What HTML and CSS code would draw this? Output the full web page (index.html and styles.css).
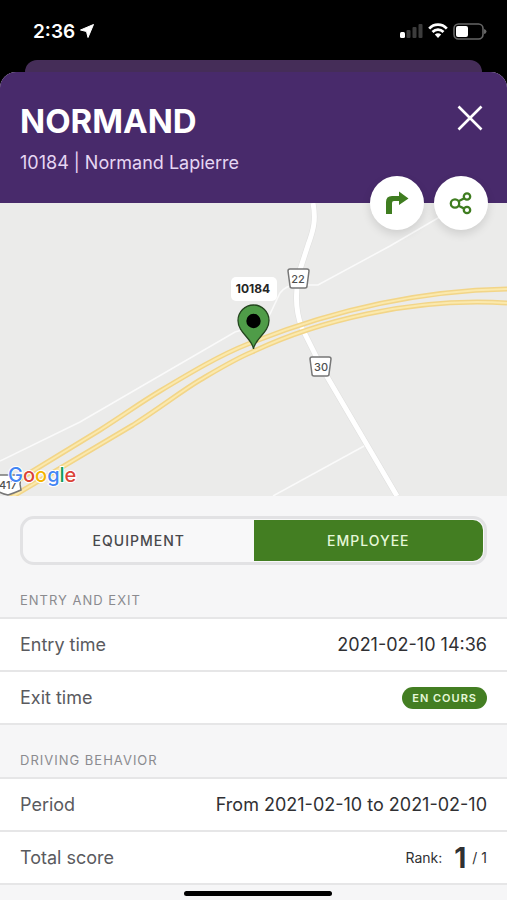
FILE: index.html
```html
<!DOCTYPE html>
<html lang="en">
<head>
    <meta charset="utf-8">
    <meta name="viewport" content="width=device-width, initial-scale=1">
    <title>Normand</title>
    <link rel="stylesheet" href="styles.css">
</head>
<body>
    <div class="status-bar">
        <div class="status-time">
            <span>2:36</span>
            <svg width="14" height="14" viewBox="0 0 14 14"><path d="M13.5 0.5L8 13.5L6.5 7.5L0.5 6Z" fill="#fff" stroke="#fff" stroke-linejoin="round"/></svg>
        </div>
        <div class="status-icons">
            <svg width="23" height="16" viewBox="0 0 23 16">
                <rect x="0" y="9" width="5" height="6" rx="1.5" fill="#fff"/>
                <rect x="6.500" y="7" width="4" height="8" rx="1" fill="#3c3c3c"/>
                <rect x="12.500" y="4" width="4" height="11" rx="1" fill="#3c3c3c"/>
                <rect x="18.500" y="1" width="4" height="14" rx="1" fill="#3c3c3c"/>
            </svg>
            <svg width="20" height="16" viewBox="0 0 20 16" fill="none" stroke="#fff" stroke-width="2.7">
                <path d="M1.2 5.6C6 0.4 14 0.4 18.8 5.6"/>
                <path d="M4.5 9C7.7 5.7 12.3 5.7 15.5 9"/>
                <path d="M10 15L6.8 11.6Q10 8.8 13.2 11.6Z" fill="#fff" stroke="none"/>
            </svg>
            <svg width="34" height="17" viewBox="0 0 34 17">
                <rect x="1" y="1" width="29" height="15" rx="4.5" fill="none" stroke="#666" stroke-width="1.6"/>
                <rect x="3" y="3" width="12" height="11" rx="2" fill="#fff"/>
                <path d="M31 6Q33.500 6.500 33.500 8.500T31 11Z" fill="#666"/>
            </svg>
        </div>
    </div>

    <div class="back-card"></div>

    <main class="sheet">
        <header class="header">
            <div>
                <h1>NORMAND</h1>
                <p class="subtitle">10184 | Normand Lapierre</p>
            </div>
            <button class="close" type="button" aria-label="Close">
                <svg width="26" height="26" viewBox="0 0 26 26"><path d="M1.500 1.500L24.500 24.500M24.500 1.500L1.500 24.500" stroke="#fff" stroke-width="2.600" fill="none"/></svg>
            </button>
            <div class="actions">
                <button class="action" type="button" aria-label="Directions">
                    <svg width="24" height="24" viewBox="0 0 24 24"><path d="M1 23V11Q1 5 7 5H14V0.500L23.500 7.500L14 14V10H9Q7 10 7 12V23Z" fill="#3f7d20"/></svg>
                </button>
                <button class="action" type="button" aria-label="Share">
                    <svg width="24" height="24" viewBox="0 0 24 24" fill="none" stroke="#3f7d20" stroke-width="2.300">
                        <circle cx="6" cy="12.500" r="4.200"/>
                        <circle cx="18" cy="5.500" r="3.200"/>
                        <circle cx="18" cy="19" r="3.200"/>
                        <path d="M9.500 10.200L15.300 7.200M9.500 14.800L15.300 17.600"/>
                    </svg>
                </button>
            </div>
        </header>

        <svg class="map" viewBox="0 0 507 293" preserveAspectRatio="xMidYMid slice" role="img" aria-label="Map">
            <!-- small roads -->
            <g class="minor-road">
                <path d="M0 258L80 219L235 129Q262 122 270 111L280 90Q286 82 297 82L318 82L390 43L450 8"/>
                <path d="M273 293L366 242"/>
            </g>
            <path class="road-edge" d="M313 0C316 16 314 26 308 42L299 70C295 90 296 110 302 125L322 165L397 293"/>
            <path class="road" d="M313 0C316 16 314 26 308 42L299 70C295 90 296 110 302 125L322 165L397 293"/>
            <!-- highway -->
            <g class="highway-edge">
                <path d="M0 288L100 227C125 211 140 200 160 188C190 170 220 152 248 141C310 116 400 88 507 86"/>
                <path d="M10 295L133 222C160 205 180 189 200 177C217 167 235 156 252 149C315 119 410 94 507 100"/>
            </g>
            <g class="highway">
                <path d="M0 288L100 227C125 211 140 200 160 188C190 170 220 152 248 141C310 116 400 88 507 86"/>
                <path d="M10 295L133 222C160 205 180 189 200 177C217 167 235 156 252 149C315 119 410 94 507 100"/>
            </g>
            <!-- road shields -->
            <g class="shield">
                <path d="M290 66H307Q309 66 309 68L307 83Q307 85 305 85H292Q290 85 290 83L288 68Q288 66 290 66Z"/>
                <text x="298" y="80">22</text>
                <path d="M312 154H329Q331 154 331 156L329 171Q329 173 327 173H314Q312 173 312 171L310 156Q310 154 312 154Z"/>
                <text x="321" y="168">30</text>
                <path d="M-4 272H18Q21 277 20 281L21 287Q14 290 8 292Q0 290 -4 287Z"/>
                <text x="8" y="286">417</text>
            </g>
            <!-- marker -->
            <path d="M253.500 146C252 135 238 130 238 117.500A15.500 15.500 0 0 1 269 117.500C269 130 255 135 253.500 146Z" fill="#4f9c48" stroke="#24451f" stroke-width="1.300"/>
            <circle cx="253.500" cy="118" r="7.200"/>
            <rect x="231" y="74" width="46" height="24" rx="5" fill="#fff"/>
            <text class="marker-label" x="253" y="90">10184</text>
            <text class="google" x="8" y="279"><tspan fill="#4285f4">G</tspan><tspan fill="#db4437">o</tspan><tspan fill="#f4b400">o</tspan><tspan fill="#4285f4">g</tspan><tspan fill="#0f9d58">l</tspan><tspan fill="#db4437">e</tspan></text>
        </svg>

        <div class="tabs">
            <button class="tab" type="button">EQUIPMENT</button>
            <button class="tab active" type="button">EMPLOYEE</button>
        </div>

        <section>
            <h2>ENTRY AND EXIT</h2>
            <dl class="list">
                <div class="row">
                    <dt>Entry time</dt>
                    <dd>2021-02-10 14:36</dd>
                </div>
                <div class="row">
                    <dt>Exit time</dt>
                    <dd><span class="badge">EN COURS</span></dd>
                </div>
            </dl>
        </section>

        <section>
            <h2>DRIVING BEHAVIOR</h2>
            <dl class="list">
                <div class="row">
                    <dt>Period</dt>
                    <dd>From 2021-02-10 to 2021-02-10</dd>
                </div>
                <div class="row">
                    <dt>Total score</dt>
                    <dd class="rank"><span>Rank:</span><strong>1</strong><span>/ 1</span></dd>
                </div>
            </dl>
        </section>
    </main>
    <div class="home-indicator"></div>
</body>
</html>
```
FILE: styles.css
```css
* {
    box-sizing: border-box;
}

body {
    margin: 0;
    min-height: 100vh;
    display: flex;
    flex-direction: column;
    background-color: #000;
    font-family: Inter, "Liberation Sans", sans-serif;
    color: #303033;
}

h1, h2, p, dl, dd {
    margin: 0;
}

button {
    padding: 0;
    border: none;
    background: none;
    font-family: inherit;
    cursor: pointer;
}

svg {
    display: block;
}

.status-bar {
    display: flex;
    justify-content: space-between;
    align-items: center;
    height: 60px;
    padding: 2px 20px 0 33px;
    color: #fff;
    font-size: 19px;
    font-weight: 600;
}

.status-time, .status-icons {
    display: flex;
    align-items: center;
    gap: 5px;
}

.back-card {
    height: 12px;
    margin: 0 25px;
    border-radius: 12px 12px 0 0;
    background-color: #452d58;
}

.sheet {
    flex: 1;
    border-radius: 16px 16px 0 0;
    background-color: #f6f6f7;
}

.header {
    position: relative;
    display: flex;
    justify-content: space-between;
    align-items: flex-start;
    padding: 27px 24px 28px 20px;
    border-radius: 16px 16px 0 0;
    background-color: #482a6b;
    color: #fff;
}

h1 {
    font-size: 33px;
    line-height: 44px;
    font-weight: 700;
}

.subtitle {
    margin-top: 8px;
    font-size: 18px;
    line-height: 24px;
    color: #e6d6f3;
}

.close {
    margin-top: 6px;
}

/* round buttons overlap the top of the map */
.actions {
    position: absolute;
    right: 19px;
    bottom: -27px;
    display: flex;
    gap: 10px;
}

.action {
    display: flex;
    align-items: center;
    justify-content: center;
    width: 54px;
    height: 54px;
    border-radius: 50%;
    background-color: #fff;
    box-shadow: 0 4px 10px rgba(0, 0, 0, 0.12);
}

.map {
    width: 100%;
    height: 293px;
    background-color: #ebebea;
}

.minor-road {
    fill: none;
    stroke: #fafafa;
    stroke-width: 1.5;
}

.road-edge, .road {
    fill: none;
    stroke: #dededd;
    stroke-width: 6;
}

.road {
    stroke: #fff;
    stroke-width: 5;
}

.highway-edge, .highway {
    fill: none;
    stroke: #f2d588;
    stroke-width: 5;
}

.highway {
    stroke: #fbe9ad;
    stroke-width: 2;
}

.shield path {
    fill: #fff;
    stroke: #777;
    stroke-width: 1.5;
}

.shield text {
    font-size: 11px;
    font-weight: 500;
    text-anchor: middle;
    fill: #505050;
}

.marker-label {
    font-size: 12px;
    font-weight: 700;
    text-anchor: middle;
    fill: #262626;
}

.google {
    font-size: 20px;
    font-weight: 500;
    stroke: #fff;
    stroke-width: 2;
    paint-order: stroke;
}

.tabs {
    display: flex;
    height: 49px;
    margin: 20px 20px 0;
    padding: 1px;
    border: 3px solid #e2e2e4;
    border-radius: 14px;
    background-color: #f8f8f9;
}

.tab {
    flex: 1;
    border-radius: 10px 0 0 10px;
    font-size: 14px;
    font-weight: 500;
    letter-spacing: 1px;
    color: #48484c;
}

.tab.active {
    border-radius: 0 10px 10px 0;
    background-color: #437e22;
    color: #e6f8d9;
}

h2 {
    padding: 25px 20px 7px;
    font-size: 13px;
    line-height: 20px;
    font-weight: 400;
    letter-spacing: 1px;
    color: #8b8b8f;
}

.list {
    border-top: 2px solid #e6e6e7;
    background-color: #fff;
}

.row {
    display: flex;
    justify-content: space-between;
    align-items: center;
    height: 53px;
    padding: 0 20px;
    border-bottom: 2px solid #e6e6e7;
    font-size: 18px;
}

dt {
    color: #5a5a5e;
}

.badge {
    display: block;
    padding: 0 10px;
    border-radius: 11px;
    background-color: #437e22;
    font-size: 11px;
    line-height: 22px;
    font-weight: 600;
    letter-spacing: 1px;
    color: #e6f8d9;
}

.rank {
    display: flex;
    align-items: center;
    gap: 6px;
    font-size: 14px;
}

.rank strong {
    margin-left: 6px;
    font-size: 28px;
    line-height: 32px;
    font-weight: 700;
}

.home-indicator {
    position: fixed;
    left: 50%;
    bottom: 4px;
    width: 148px;
    height: 5px;
    margin-left: -70px;
    border-radius: 3px;
    background-color: #000;
}
```
